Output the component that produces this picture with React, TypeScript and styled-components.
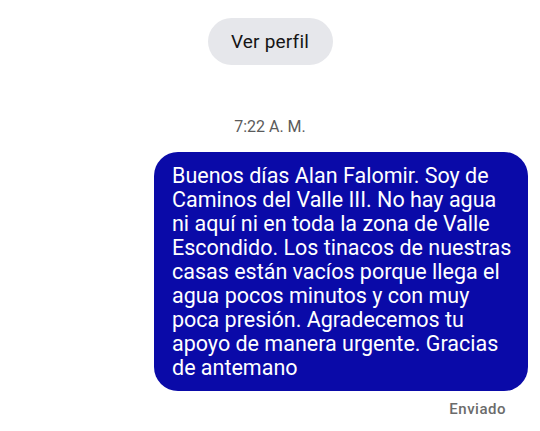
import React from 'react';
import styled, { createGlobalStyle } from 'styled-components';

const GlobalStyle = createGlobalStyle`
  html, body {
    margin: 0;
    padding: 0;
    background: #ffffff;
  }
  body {
    font-family: Roboto, "Noto Sans", "Liberation Sans", sans-serif;
  }
`;

const Screen = styled.div`
  width: 540px;
  height: 431px;
  overflow: hidden;
  display: flex;
  flex-direction: column;
  background: #ffffff;
`;

const ProfileRow = styled.div`
  display: flex;
  justify-content: center;
  padding-top: 18px;
`;

const ProfileButton = styled.button`
  width: 125px;
  height: 47px;
  border: none;
  border-radius: 24px;
  background: #e6e7eb;
  color: #151515;
  font-family: Roboto, sans-serif;
  font-size: 19px;
  font-weight: 400;
  letter-spacing: 0.2px;
  cursor: pointer;
`;

const Timestamp = styled.div`
  margin-top: 53px;
  text-align: center;
  font-size: 16px;
  color: #5b5b5b;
  line-height: 18px;
`;

const OutgoingRow = styled.div`
  display: flex;
  justify-content: flex-end;
  padding-right: 12px;
  margin-top: 16px;
`;

const Bubble = styled.div`
  width: 374px;
  box-sizing: border-box;
  padding: 12px 12px 11px 18px;
  border-radius: 24px;
  background: #0a0aa8;
  color: #ffffff;
  font-size: 21.5px;
  line-height: 24px;
`;

const Line = styled.span`
  display: block;
  white-space: nowrap;
`;

const Status = styled.div`
  align-self: flex-end;
  margin-top: 9px;
  padding-right: 34px;
  font-size: 15px;
  font-weight: 500;
  letter-spacing: 0.5px;
  color: #6b6b6b;
`;

const messageLines = [
  'Buenos días Alan Falomir. Soy de',
  'Caminos del Valle III. No hay agua',
  'ni aquí ni en toda la zona de Valle',
  'Escondido. Los tinacos de nuestras',
  'casas están vacíos porque llega el',
  'agua pocos minutos y con muy',
  'poca presión. Agradecemos tu',
  'apoyo de manera urgente. Gracias',
  'de antemano',
];

export default function App() {
  return (
    <Screen>
      <GlobalStyle />
      <ProfileRow>
        <ProfileButton>Ver perfil</ProfileButton>
      </ProfileRow>
      <Timestamp>7:22 A. M.</Timestamp>
      <OutgoingRow>
        <Bubble>
          {messageLines.map((line) => (
            <Line key={line}>{line}</Line>
          ))}
        </Bubble>
      </OutgoingRow>
      <Status>Enviado</Status>
    </Screen>
  );
}
